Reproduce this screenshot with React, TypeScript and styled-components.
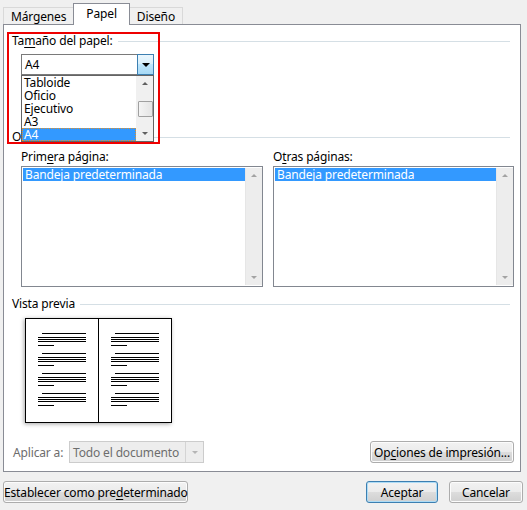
import * as React from 'react';
import styled, { createGlobalStyle } from 'styled-components';

const GlobalStyle = createGlobalStyle`
  html, body {
    margin: 0;
    padding: 0;
    background: #f0f0f0;
  }
  body {
    font-family: "Noto Sans", "DejaVu Sans", sans-serif;
    font-size: 12px;
    letter-spacing: -0.15px;
    color: #000;
  }
`;

const Dialog = styled.div`
  width: 527px;
  height: 510px;
  background: #f0f0f0;
  padding-top: 3px;
  box-sizing: border-box;
`;

const TabBar = styled.div`
  display: flex;
  align-items: flex-end;
  height: 21px;
  margin-left: 3px;
`;

const Tab = styled.div<{ $active?: boolean }>`
  position: relative;
  box-sizing: border-box;
  display: flex;
  align-items: center;
  justify-content: center;
  height: ${(p) => (p.$active ? '22px' : '17px')};
  margin-bottom: ${(p) => (p.$active ? '-1px' : '0')};
  margin-left: -1px;
  padding: 0 ${(p) => (p.$active ? '12px' : '7px')};
  padding-bottom: ${(p) => (p.$active ? '2px' : '0')};
  background: ${(p) => (p.$active ? '#fff' : '#f0f0f0')};
  border: 1px solid ${(p) => (p.$active ? '#898c95' : '#d9d9d9')};
  border-bottom: none;
  z-index: ${(p) => (p.$active ? 2 : 1)};
  white-space: nowrap;
  &:first-child {
    margin-left: 0;
  }
`;

const Panel = styled.div`
  position: relative;
  box-sizing: border-box;
  width: 518px;
  height: 448px;
  margin-left: 3px;
  background: #fff;
  border: 1px solid #898c95;
  padding: 0 6px 0 8px;
  display: flex;
  flex-direction: column;
`;

const Heading = styled.div<{ $top: number }>`
  display: flex;
  align-items: center;
  gap: 5px;
  height: 16px;
  line-height: 16px;
  margin-top: ${(p) => p.$top}px;
  margin-right: 4px;
  white-space: nowrap;
  &::after {
    content: '';
    flex: 1;
    height: 1px;
    background: #d5dfe5;
  }
`;

const Key = styled.span`
  text-decoration: underline;
  text-underline-offset: 2px;
`;

const ComboWrap = styled.div`
  position: relative;
  width: 133px;
  margin: 5px 0 0 9px;
  z-index: 3;
`;

const Combo = styled.div`
  box-sizing: border-box;
  display: flex;
  align-items: center;
  height: 21px;
  border: 1px solid #7a7a7a;
  padding-left: 3px;
  background: #fff;
`;

const ComboText = styled.span`
  flex: 1;
  white-space: nowrap;
`;

const DropButton = styled.div`
  box-sizing: border-box;
  width: 17px;
  height: 21px;
  margin: -1px -1px -1px 0;
  border: 1px solid #3c7fb1;
  background: linear-gradient(#eaf6fd 0%, #d9f0fc 45%, #bee6fd 50%, #a7d9f5 100%);
  display: flex;
  align-items: center;
  justify-content: center;
`;

const Tri = styled.span<{ $dir: 'up' | 'down'; $color: string; $size?: number }>`
  width: 0;
  height: 0;
  border-left: ${(p) => p.$size ?? 4}px solid transparent;
  border-right: ${(p) => p.$size ?? 4}px solid transparent;
  ${(p) =>
    p.$dir === 'down'
      ? `border-top: ${(p.$size ?? 4)}px solid ${p.$color};`
      : `border-bottom: ${(p.$size ?? 4)}px solid ${p.$color};`}
`;

const Popup = styled.div`
  position: absolute;
  top: 100%;
  left: 0;
  box-sizing: border-box;
  width: 133px;
  height: 67px;
  border: 1px solid #646464;
  background: #fff;
  display: flex;
`;

const PopupItems = styled.div`
  flex: 1;
  display: flex;
  flex-direction: column;
`;

const PopupItem = styled.div<{ $selected?: boolean }>`
  box-sizing: border-box;
  height: 13px;
  line-height: 13px;
  padding-left: 2px;
  white-space: nowrap;
  background: ${(p) => (p.$selected ? '#3399ff' : 'transparent')};
  color: ${(p) => (p.$selected ? '#fff' : '#000')};
  outline: ${(p) => (p.$selected ? '1px dotted #e0902a' : 'none')};
  outline-offset: -1px;
`;

const ScrollBar = styled.div<{ $active?: boolean }>`
  width: 17px;
  flex-shrink: 0;
  display: flex;
  flex-direction: column;
  align-items: center;
  justify-content: space-between;
  padding: 6px 0;
  box-sizing: border-box;
  background: ${(p) => (p.$active ? '#f0f0f0' : '#ededed')};
  border-left: 1px solid ${(p) => (p.$active ? '#f0f0f0' : '#e6e6e6')};
`;

const Thumb = styled.div`
  box-sizing: border-box;
  width: 15px;
  height: 16px;
  border: 1px solid #a0a0a0;
  border-radius: 1px;
  background: linear-gradient(90deg, #f4f4f4, #e4e4e4);
`;

const RedFrame = styled.div`
  position: absolute;
  left: 3px;
  top: 7px;
  width: 153px;
  height: 112px;
  box-sizing: border-box;
  border: 2px solid #ee0000;
  pointer-events: none;
  z-index: 4;
`;

const Columns = styled.div`
  display: grid;
  grid-template-columns: 242px 241px;
  column-gap: 10px;
  margin: 4px 0 0 9px;
`;

const Label = styled.div`
  height: 16px;
  line-height: 16px;
  margin-bottom: 1px;
  white-space: nowrap;
`;

const ListBox = styled.div`
  box-sizing: border-box;
  height: 121px;
  border: 1px solid #828790;
  background: #fff;
  display: flex;
  padding: 1px 0 1px 1px;
`;

const ListItems = styled.div`
  flex: 1;
`;

const ListItem = styled.div`
  height: 13px;
  line-height: 13px;
  padding-left: 2px;
  background: #3399ff;
  color: #fff;
  white-space: nowrap;
`;

const Preview = styled.div`
  margin: 6px 0 0 13px;
  width: 147px;
  height: 105px;
  filter: drop-shadow(-1px 1px 2px rgba(0, 0, 0, 0.35));
  svg {
    display: block;
  }
`;

const ApplyRow = styled.div`
  display: flex;
  align-items: center;
  height: 22px;
  margin-top: 18px;
`;

const MutedLabel = styled.span`
  width: 56px;
  padding-left: 1px;
  color: #6d6d6d;
  white-space: nowrap;
`;

const DisabledCombo = styled.div`
  box-sizing: border-box;
  width: 135px;
  height: 22px;
  border: 1px solid #cccccc;
  background: #ededed;
  color: #6d6d6d;
  display: flex;
  align-items: center;
  padding-left: 3px;
`;

const DisabledDrop = styled.div`
  width: 17px;
  height: 20px;
  border-left: 1px solid #d4d4d4;
  display: flex;
  align-items: center;
  justify-content: center;
`;

const Button = styled.button<{ $width: number; $default?: boolean }>`
  box-sizing: border-box;
  width: ${(p) => p.$width}px;
  height: 22px;
  padding: 0;
  font: inherit;
  letter-spacing: inherit;
  white-space: nowrap;
  color: #000;
  border: 1px solid ${(p) => (p.$default ? '#3c7fb1' : '#acacac')};
  border-radius: 3px;
  background: linear-gradient(#f2f2f2, #ebebeb 50%, #dddddd 51%, #cfcfcf);
  box-shadow: inset 0 0 0 1px ${(p) => (p.$default ? '#aedcf6' : '#fcfcfc')};
`;

const Footer = styled.div`
  display: flex;
  align-items: center;
  margin: 9px 4px 0 3px;
  gap: 11px;
`;

const Spacer = styled.div`
  flex: 1;
`;

function BookPreview() {
  const paras = [15, 35, 55, 75];
  const page = (x: number) => (
    <g key={x}>
      <rect x={x + 0.5} y={0.5} width={73} height={104} fill="#fff" stroke="#000" />
      {paras.map((py) => (
        <g key={py} stroke="#000" strokeWidth={1}>
          <line x1={x + 17} x2={x + 61} y1={py + 0.5} y2={py + 0.5} />
          <line x1={x + 13} x2={x + 61} y1={py + 4.5} y2={py + 4.5} />
          <line x1={x + 13} x2={x + 61} y1={py + 6.5} y2={py + 6.5} />
          <line x1={x + 13} x2={x + 61} y1={py + 8.5} y2={py + 8.5} />
          <line x1={x + 13} x2={x + 29} y1={py + 12.5} y2={py + 12.5} />
        </g>
      ))}
    </g>
  );
  return (
    <svg width="147" height="105" viewBox="0 0 147 105">
      {page(0)}
      {page(73)}
    </svg>
  );
}

export default function App() {
  return (
    <Dialog>
      <GlobalStyle />
      <TabBar>
        <Tab>Márgenes</Tab>
        <Tab $active>Papel</Tab>
        <Tab>Diseño</Tab>
      </TabBar>
      <Panel>
        <RedFrame />
        <Heading $top={8}>
          <span>
            Ta<Key>m</Key>año del papel:
          </span>
        </Heading>
        <ComboWrap>
          <Combo>
            <ComboText>A4</ComboText>
            <DropButton>
              <Tri $dir="down" $color="#000" />
            </DropButton>
          </Combo>
          <Popup>
            <PopupItems>
              <PopupItem>Tabloide</PopupItem>
              <PopupItem>Oficio</PopupItem>
              <PopupItem>Ejecutivo</PopupItem>
              <PopupItem>A3</PopupItem>
              <PopupItem $selected>A4</PopupItem>
            </PopupItems>
            <ScrollBar $active>
              <Tri $dir="up" $color="#606060" $size={3} />
              <Thumb />
              <Tri $dir="down" $color="#606060" $size={3} />
            </ScrollBar>
          </Popup>
        </ComboWrap>
        <Heading $top={54}>
          <span>
            <Key>O</Key>rigen del papel
          </span>
        </Heading>
        <Columns>
          <div>
            <Label>
              Prim<Key>e</Key>ra página:
            </Label>
            <ListBox>
              <ListItems>
                <ListItem>Bandeja predeterminada</ListItem>
              </ListItems>
              <ScrollBar>
                <Tri $dir="up" $color="#a3a3a3" $size={3} />
                <Tri $dir="down" $color="#a3a3a3" $size={3} />
              </ScrollBar>
            </ListBox>
          </div>
          <div>
            <Label>
              O<Key>t</Key>ras páginas:
            </Label>
            <ListBox>
              <ListItems>
                <ListItem>Bandeja predeterminada</ListItem>
              </ListItems>
              <ScrollBar>
                <Tri $dir="up" $color="#a3a3a3" $size={3} />
                <Tri $dir="down" $color="#a3a3a3" $size={3} />
              </ScrollBar>
            </ListBox>
          </div>
        </Columns>
        <Heading $top={9}>
          <span>Vista previa</span>
        </Heading>
        <Preview>
          <BookPreview />
        </Preview>
        <ApplyRow>
          <MutedLabel>Aplicar a:</MutedLabel>
          <DisabledCombo>
            <ComboText>Todo el documento</ComboText>
            <DisabledDrop>
              <Tri $dir="down" $color="#b5b5b5" $size={3} />
            </DisabledDrop>
          </DisabledCombo>
          <Spacer />
          <Button $width={144}>
            Op<Key>c</Key>iones de impresión...
          </Button>
        </ApplyRow>
      </Panel>
      <Footer>
        <Button $width={185}>
          Establecer como pre<Key>d</Key>eterminado
        </Button>
        <Spacer />
        <Button $width={72} $default>
          Aceptar
        </Button>
        <Button $width={74}>Cancelar</Button>
      </Footer>
    </Dialog>
  );
}
